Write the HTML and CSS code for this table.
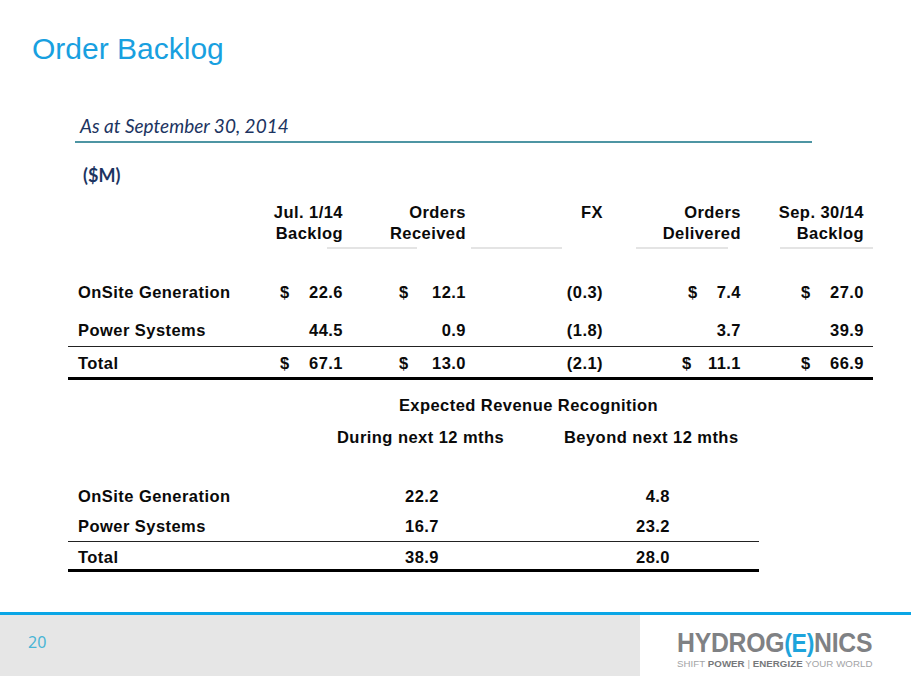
FILE: index.html
```html
<!DOCTYPE html>
<html>
<head>
<meta charset="utf-8">
<link rel="stylesheet" href="styles.css">
</head>
<body>
<div class="slide">
  <h1 class="title">Order Backlog</h1>
  <div class="asat">As at September 30, 2014</div>
  <div class="unit">($M)</div>

  <div class="t1">
    <div class="row1 head">
      <div></div>
      <div class="r">Jul. 1/14<br>Backlog</div>
      <div class="r">Orders<br>Received</div>
      <div class="r">FX</div>
      <div class="r">Orders<br>Delivered</div>
      <div class="r">Sep. 30/14<br>Backlog</div>
      <div></div>
    </div>
    <div class="segs"><span class="s1"></span><span class="s2"></span><span class="s3"></span><span class="s4"></span></div>
    <div class="row1 data first">
      <div class="lbl">OnSite Generation</div>
      <div class="m c-jul"><span>$</span><span>22.6</span></div>
      <div class="m c-or"><span>$</span><span>12.1</span></div>
      <div class="r">(0.3)</div>
      <div class="m c-od"><span>$</span><span>7.4</span></div>
      <div class="m c-sep"><span>$</span><span>27.0</span></div>
      <div></div>
    </div>
    <div class="row1 data">
      <div class="lbl">Power Systems</div>
      <div class="r">44.5</div>
      <div class="r">0.9</div>
      <div class="r">(1.8)</div>
      <div class="r">3.7</div>
      <div class="r">39.9</div>
      <div></div>
    </div>
    <div class="row1 total">
      <div class="lbl">Total</div>
      <div class="m c-jul"><span>$</span><span>67.1</span></div>
      <div class="m c-or"><span>$</span><span>13.0</span></div>
      <div class="r">(2.1)</div>
      <div class="m c-od2"><span>$</span><span>11.1</span></div>
      <div class="m c-sep"><span>$</span><span>66.9</span></div>
      <div></div>
    </div>
  </div>

  <div class="t2">
    <div class="row2 cap">
      <div></div>
      <div class="caption">Expected Revenue Recognition</div>
    </div>
    <div class="row2 sub">
      <div></div>
      <div>During next 12 mths</div>
      <div></div>
      <div>Beyond next 12 mths</div>
      <div></div>
    </div>
    <div class="row2 data2 first2">
      <div class="lbl">OnSite Generation</div>
      <div class="v1">22.2</div>
      <div></div>
      <div class="v2">4.8</div>
      <div></div>
    </div>
    <div class="row2 data2">
      <div class="lbl">Power Systems</div>
      <div class="v1">16.7</div>
      <div></div>
      <div class="v2">23.2</div>
      <div></div>
    </div>
    <div class="row2 total2">
      <div class="lbl">Total</div>
      <div class="v1">38.9</div>
      <div></div>
      <div class="v2">28.0</div>
      <div></div>
    </div>
  </div>

  <footer class="footer">
    <div class="pagenum">20</div>
    <div class="logo">
      <div class="brand">HYDROG<span class="brand-e">(E)</span>NICS</div>
      <div class="tagline">SHIFT <b>POWER</b> | <b>ENERGIZE</b> YOUR WORLD</div>
    </div>
  </footer>
</div>
</body>
</html>
```
FILE: styles.css
```css
html, body {
  margin: 0;
  padding: 0;
  background: #ffffff;
}

.slide {
  width: 911px;
  height: 676px;
  display: flex;
  flex-direction: column;
  overflow: hidden;
}

.title {
  margin: 0;
  padding: 31px 0 0 32px;
  font-family: "Liberation Sans", Arial, sans-serif;
  font-weight: normal;
  font-size: 30px;
  line-height: 36px;
  color: #18a0e0;
}

.asat {
  margin: 48px 0 0 75px;
  width: 732px;
  padding: 0 0 4px 5px;
  border-bottom: 2px solid #4d95a3;
  font-family: Lato, "Open Sans", sans-serif;
  font-style: italic;
  font-size: 19px;
  line-height: 22px;
  color: #1c3461;
}

.unit {
  margin: 21px 0 0 83px;
  font-family: Lato, "Open Sans", sans-serif;
  font-weight: bold;
  font-size: 18px;
  line-height: 22px;
  color: #1c3461;
}

.t1, .t2 {
  font-family: "Liberation Sans", Arial, sans-serif;
  font-weight: bold;
  font-size: 16.5px;
  letter-spacing: 0.45px;
  color: #0a0a0a;
  margin-left: 68px;
  white-space: nowrap;
}

.t1 {
  width: 805px;
  margin-top: 16px;
}

.row1 {
  display: grid;
  grid-template-columns: 200px 75px 123px 137px 138px 123px 9px;
}

.head {
  line-height: 21px;
}

.r {
  text-align: right;
}

.lbl {
  padding-left: 10px;
}

.segs {
  display: flex;
  margin-top: 3px;
  height: 2px;
}

.segs span {
  display: block;
  height: 2px;
  background: #e4e4e4;
}

.segs .s1 { margin-left: 259px; width: 90px; }
.segs .s2 { margin-left: 54px; width: 91px; }
.segs .s3 { margin-left: 74px; width: 92px; }
.segs .s4 { margin-left: 52px; width: 93px; }

.data {
  height: 32px;
  line-height: 32px;
}

.data.first {
  margin-top: 27px;
  margin-bottom: 6px;
}

.total {
  height: 30px;
  line-height: 33px;
  border-top: 1px solid #222;
  border-bottom: 3px solid #000;
}

.m {
  display: flex;
  justify-content: space-between;
}

.c-jul { padding-left: 12px; }
.c-or { padding-left: 56px; }
.c-od { padding-left: 85px; }
.c-od2 { padding-left: 79px; }
.c-sep { padding-left: 60px; }

.t2 {
  width: 691px;
  margin-top: 15px;
}

.row2 {
  display: grid;
  grid-template-columns: 269px 170px 57px 178px 17px;
}

.cap {
  line-height: 21px;
}

.caption {
  grid-column: 2 / 6;
  text-align: center;
  padding-right: 39px;
}

.sub {
  margin-top: 11px;
  line-height: 21px;
}

.data2 {
  height: 30px;
  line-height: 30px;
}

.data2.first2 {
  margin-top: 33px;
}

.total2 {
  height: 27px;
  line-height: 30px;
  border-top: 1px solid #222;
  border-bottom: 3px solid #000;
}

.v1 {
  text-align: right;
  padding-right: 68px;
}

.v2 {
  text-align: right;
  padding-right: 72px;
}

.footer {
  margin-top: auto;
  display: flex;
  height: 61px;
  border-top: 3px solid #0aa6e6;
}

.pagenum {
  width: 640px;
  background: #e6e6e6;
  box-sizing: border-box;
  padding: 17px 0 0 28px;
  font-family: "Noto Sans", sans-serif;
  font-size: 16px;
  line-height: 20px;
  color: #49b5d5;
}

.logo {
  flex: 1;
  background: #ffffff;
  padding: 14px 0 0 37px;
  font-family: "Liberation Sans", Arial, sans-serif;
}

.brand {
  font-size: 28px;
  line-height: 28px;
  font-weight: bold;
  color: #7f8184;
  letter-spacing: -0.3px;
  white-space: nowrap;
  transform: scaleX(0.885);
  transform-origin: left center;
}

.brand-e {
  color: #1ea4dc;
  font-size: 26px;
}

.tagline {
  margin-top: 1px;
  font-size: 9.7px;
  line-height: 11px;
  letter-spacing: 0.05px;
  color: #a3a4a6;
  white-space: nowrap;
}

.tagline b {
  color: #76787b;
}
```
